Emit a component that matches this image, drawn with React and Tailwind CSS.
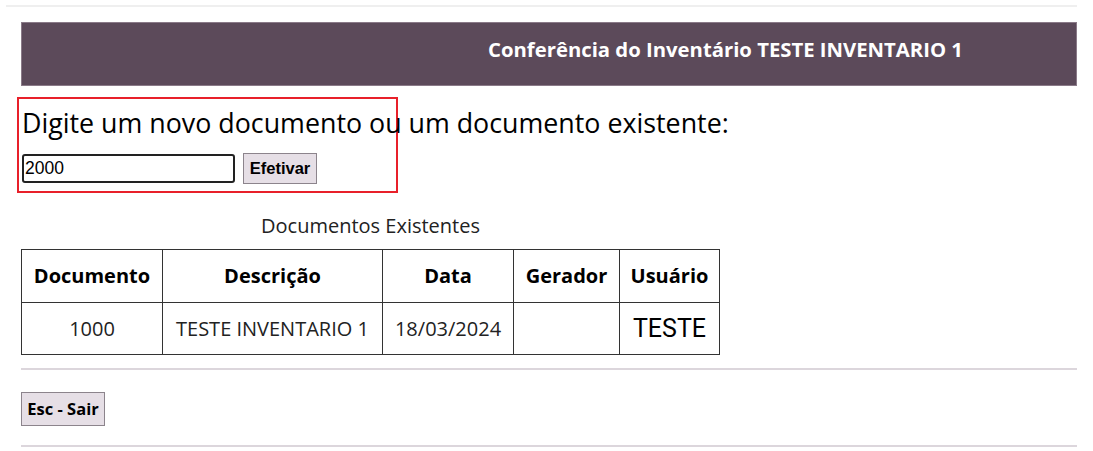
export default function App() {
  const sans = { fontFamily: '"Open Sans", "Noto Sans", sans-serif' };
  const arial = { fontFamily: '"Liberation Sans", Arial, sans-serif' };
  return (
    <div className="w-[1093px] h-[451px] bg-white overflow-hidden relative" style={sans}>
      <div className="ml-[6px] mr-[16px] pt-[5px]">
        <div className="h-[2px] bg-[#efefef]" />
      </div>
      <div className="ml-[21px] mr-[16px] mt-[15px] h-[64px] bg-[#5c4a5a] border border-[#8a7a88] grid grid-cols-[353px_1fr] items-center">
        <div />
        <div className="text-center text-white font-bold text-[20.3px] pb-[9px]">
          Conferência do Inventário TESTE INVENTARIO 1
        </div>
      </div>
      <div className="ml-[17px] mt-[11px] w-[381px] h-[96px] border-2 border-[#e8202a] pl-[3px] pt-[7px]">
        <div className="text-[26.8px] leading-[34px] text-black whitespace-nowrap">
          Digite um novo documento ou um documento existente:
        </div>
        <div className="flex items-center gap-[8px] mt-[13px]">
          <input
            defaultValue="2000"
            className="w-[213px] h-[29px] border-2 border-[#222] rounded-[3px] px-[1px] text-[17.5px] text-black outline-none"
            style={arial}
          />
          <button
            className="w-[74px] h-[31px] bg-[#e6dfe6] border border-[#8c848c] text-[16.5px] font-bold text-black"
            style={arial}
          >
            Efetivar
          </button>
        </div>
      </div>
      <table className="ml-[21px] mt-[19px] border-collapse text-black">
        <caption className="text-[20px] leading-[28px] pb-[9px] text-[#222]">Documentos Existentes</caption>
        <thead>
          <tr className="h-[53px]">
            <th className="w-[141px] border border-[#333] text-[20px] font-bold">Documento</th>
            <th className="w-[220px] border border-[#333] text-[20px] font-bold">Descrição</th>
            <th className="w-[131px] border border-[#333] text-[20px] font-bold">Data</th>
            <th className="w-[106px] border border-[#333] text-[20px] font-bold">Gerador</th>
            <th className="w-[100px] border border-[#333] text-[20px] font-bold">Usuário</th>
          </tr>
        </thead>
        <tbody>
          <tr className="h-[52px]">
            <td className="border border-[#333] text-center text-[20px] text-[#222]">1000</td>
            <td className="border border-[#333] text-center text-[20px] text-[#222]">TESTE INVENTARIO 1</td>
            <td className="border border-[#333] text-center text-[20px] text-[#222]">18/03/2024</td>
            <td className="border border-[#333]"></td>
            <td className="border border-[#333] text-center text-[25px]" style={{ fontFamily: 'Roboto, sans-serif' }}>TESTE</td>
          </tr>
        </tbody>
      </table>
      <div className="ml-[21px] mr-[16px] mt-[13px] h-[2px] bg-[#dcd6dc]" />
      <button className="ml-[21px] mt-[22px] w-[84px] h-[34px] bg-[#e6dfe6] border border-[#8c848c] text-[16.5px] font-bold text-black block">
        Esc - Sair
      </button>
      <div className="ml-[21px] mr-[16px] mt-[19px] h-[2px] bg-[#dcd6dc]" />
    </div>
  );
}
